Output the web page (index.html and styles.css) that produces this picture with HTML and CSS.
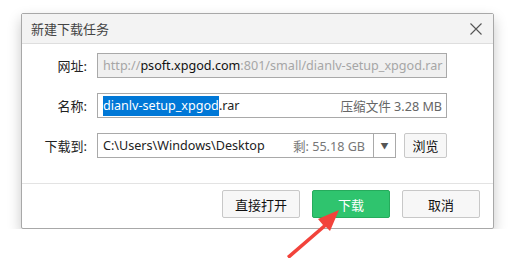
FILE: index.html
```html
<!DOCTYPE html>
<html lang="zh-CN">
<head>
    <meta charset="utf-8"/>
    <title>新建下载任务</title>
    <link rel="stylesheet" href="styles.css">
</head>
<body>
<div class="dialog">
    <div class="titlebar">
        <span class="title">新建下载任务</span>
        <svg class="close" width="12" height="12" viewBox="0 0 12 12">
            <path d="M0.5 0.5 L11.5 11.5 M11.5 0.5 L0.5 11.5" stroke="#555" stroke-width="1.1" fill="none"/>
        </svg>
    </div>

    <div class="content">
        <div class="row">
            <span class="label">网址:</span>
            <div class="field url">
                <span class="dim">http://</span>psoft.xpgod.com<span class="dim">:801/small/dianlv-setup_xpgod.rar</span>
            </div>
        </div>
        <div class="row">
            <span class="label">名称:</span>
            <div class="field name">
                <span><span class="sel">dianlv-setup_xpgod</span>.rar</span>
                <span class="size">压缩文件 3.28 MB</span>
            </div>
        </div>
        <div class="row">
            <span class="label">下载到:</span>
            <div class="field path">
                <span>C:\Users\Windows\Desktop</span>
                <span class="free">剩: 55.18 GB</span>
            </div>
            <div class="drop">&#9660;</div>
            <button class="btn small">浏览</button>
        </div>
    </div>

    <div class="footer">
        <button class="btn">直接打开</button>
        <button class="btn primary">下载</button>
        <button class="btn">取消</button>
    </div>
</div>

<svg class="arrow" width="70" height="60" viewBox="0 0 70 60">
    <path d="M3 52 L39 21 L34 15 L55 6 L46 27 L42 23 L5 55 Z" fill="#f2433b"/>
</svg>
</body>
</html>
```

FILE: styles.css
```css
body {
    margin: 0;
    padding: 0;
    background: #ffffff;
    font-family: "Noto Sans", "Noto Sans CJK SC", sans-serif;
    font-size: 13px;
    color: #222;
}

.dialog {
    margin: 13px 0 0 21px;
    width: 471px;
    height: 214px;
    border: 1px solid #a8a8a8;
    border-radius: 2px;
    background: #fff;
    box-shadow: 0 6px 14px rgba(0, 0, 0, 0.22);
    display: flex;
    flex-direction: column;
}

.titlebar {
    height: 29px;
    background: #f3f3f3;
    border-bottom: 1px solid #dedede;
    display: flex;
    align-items: center;
    justify-content: space-between;
    padding: 0 11px 0 9px;
}

.title {
    color: #444;
    font-size: 13px;
}

.content {
    flex: 1;
    display: flex;
    flex-direction: column;
    gap: 15px;
    padding: 9px 0 0 0;
    border-bottom: 1px solid #e3e3e3;
}

.row {
    display: flex;
    align-items: center;
    height: 25px;
}

.label {
    width: 65px;
    text-align: right;
    padding-right: 10px;
    color: #222;
}

.field {
    box-sizing: border-box;
    height: 25px;
    width: 350px;
    border: 1px solid #a9a9a9;
    display: flex;
    align-items: center;
    justify-content: space-between;
    padding: 0 4px 0 5px;
    white-space: nowrap;
    overflow: hidden;
    font-size: 12.6px;
}

.url {
    background: #f0f0f0;
    justify-content: flex-start;
    color: #111;
}

.dim {
    color: #a6a6a6;
}

.sel {
    background: #0078d7;
    color: #fff;
    padding: 1px 0 2px;
}

.size {
    color: #666;
}

.path {
    width: 276px;
    border-right: none;
    padding-right: 8px;
}

.free {
    color: #777;
}

.drop {
    box-sizing: border-box;
    width: 23px;
    height: 25px;
    border: 1px solid #a9a9a9;
    display: flex;
    align-items: center;
    justify-content: center;
    font-size: 8px;
    color: #555;
}

.btn {
    box-sizing: border-box;
    width: 78px;
    height: 28px;
    border: 1px solid #c8c8c8;
    border-radius: 2px;
    background: #f7f7f7;
    font-family: "Noto Sans", "Noto Sans CJK SC", sans-serif;
    font-size: 13px;
    color: #111;
    padding: 0;
}

.btn.small {
    width: 43px;
    height: 25px;
    margin-left: 8px;
}

.btn.primary {
    background: #2fc46e;
    border-color: #26ab5c;
    color: #fff;
}

.footer {
    height: 44px;
    display: flex;
    justify-content: flex-end;
    gap: 12px;
    padding: 6px 13px 0 0;
    box-sizing: border-box;
}

.arrow {
    position: absolute;
    left: 284px;
    top: 204px;
}
```
